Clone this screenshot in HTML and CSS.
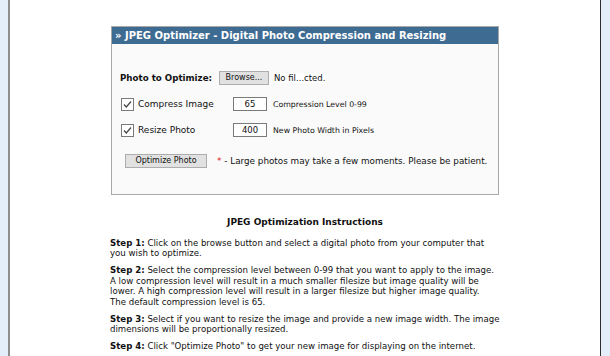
FILE: index.html
```html
<!DOCTYPE html>
<html>
  <head>
    <title>JPEG Optimizer</title>
    <link rel="stylesheet" href="styles.css">
  </head>
  <body>
    <div class="page">

      <div class="panel">
        <div class="panel-head">&raquo; JPEG Optimizer - Digital Photo Compression and Resizing</div>
        <div class="panel-body">
          <div class="row row-file">
            <span class="file-label">Photo to Optimize:</span>
            <span class="btn browse-btn">Browse...</span>
            <span class="file-name">No fil...cted.</span>
          </div>

          <div class="row row-opt">
            <span class="check-label">
              <svg class="check" width="13" height="13" viewBox="0 0 13 13">
                <rect x="0.5" y="0.5" width="12" height="12" fill="#fff" stroke="#7a7a7a"/>
                <path d="M3 6.5 L5.3 9 L10 3.5" fill="none" stroke="#444" stroke-width="1.2"/>
              </svg>
              Compress Image
            </span>
            <span class="num-box">65</span>
            <span class="hint">Compression Level 0-99</span>
          </div>

          <div class="row row-opt">
            <span class="check-label">
              <svg class="check" width="13" height="13" viewBox="0 0 13 13">
                <rect x="0.5" y="0.5" width="12" height="12" fill="#fff" stroke="#7a7a7a"/>
                <path d="M3 6.5 L5.3 9 L10 3.5" fill="none" stroke="#444" stroke-width="1.2"/>
              </svg>
              Resize Photo
            </span>
            <span class="num-box">400</span>
            <span class="hint">New Photo Width in Pixels</span>
          </div>

          <div class="row row-submit">
            <span class="btn submit-btn">Optimize Photo</span>
            <span class="note"><span class="star">*</span> - Large photos may take a few moments. Please be patient.</span>
          </div>
        </div>
      </div>

      <div class="instructions">
        <h3>JPEG Optimization Instructions</h3>

        <p><b>Step 1:</b> Click on the browse button and select a digital photo from your computer that<br>
        you wish to optimize.</p>

        <p><b>Step 2:</b> Select the compression level between 0-99 that you want to apply to the image.<br>
        A low compression level will result in a much smaller filesize but image quality will be<br>
        lower. A high compression level will result in a larger filesize but higher image quality.<br>
        The default compression level is 65.</p>

        <p><b>Step 3:</b> Select if you want to resize the image and provide a new image width. The image<br>
        dimensions will be proportionally resized.</p>

        <p><b>Step 4:</b> Click "Optimize Photo" to get your new image for displaying on the internet.</p>
      </div>

    </div>
  </body>
</html>
```

FILE: styles.css
```css
body {
  margin: 0;
  background-color: #e4eefb;
  font-family: "DejaVu Sans", Verdana, sans-serif;
  color: #111;
}

.page {
  margin: 0 9px 0 8px;
  min-height: 356px;
  background-color: #fff;
  border-left: 2px solid #8e8e8e;
  border-right: 1px solid #2e2e2e;
  padding-top: 26px;
  overflow: hidden;
}

.panel {
  width: 386px;
  height: 167px;
  margin: 0 auto;
  border: 1px solid #a8a8a8;
  background-color: #fafafa;
}

.panel-head {
  background-color: #3e6b92;
  color: #fff;
  font-weight: bold;
  font-size: 10px;
  height: 17px;
  line-height: 17px;
  padding-left: 3px;
  white-space: nowrap;
}

.panel-body {
  padding: 27px 0 0 8px;
}

.row {
  display: flex;
  align-items: center;
  height: 14px;
}

.row-opt {
  margin-top: 12px;
}

.row-submit {
  margin-top: 17px;
  padding-left: 5px;
}

.file-label {
  font-weight: bold;
  font-size: 8.7px;
  width: 99px;
}

.btn {
  display: inline-block;
  background-color: #e1e1e1;
  border: 1px solid #adadad;
  font-size: 8px;
  line-height: 12px;
  height: 12px;
  text-align: center;
  color: #111;
}

.browse-btn {
  width: 48px;
}

.file-name {
  font-size: 8.5px;
  margin-left: 5px;
  background-color: #fff;
}

.check-label {
  display: flex;
  align-items: center;
  width: 112px;
  padding-left: 1px;
  font-size: 9px;
}

.check {
  margin-right: 4px;
}

.num-box {
  display: inline-block;
  width: 32px;
  height: 12px;
  line-height: 12px;
  border: 1px solid #7a7a7a;
  background-color: #fff;
  text-align: center;
  font-size: 8.5px;
}

.hint {
  margin-left: 6px;
  font-size: 7.8px;
}

.submit-btn {
  width: 80px;
}

.note {
  margin-left: 10px;
  font-size: 8.8px;
}

.star {
  color: #e02020;
  font-size: 9px;
}

.instructions {
  width: 390px;
  margin: 22px auto 0;
  font-size: 8.6px;
  line-height: 10.5px;
}

.instructions h3 {
  text-align: center;
  font-size: 9px;
  margin: 0 0 10px;
}

.instructions p {
  margin: 0 0 6.5px;
  white-space: nowrap;
}
```
